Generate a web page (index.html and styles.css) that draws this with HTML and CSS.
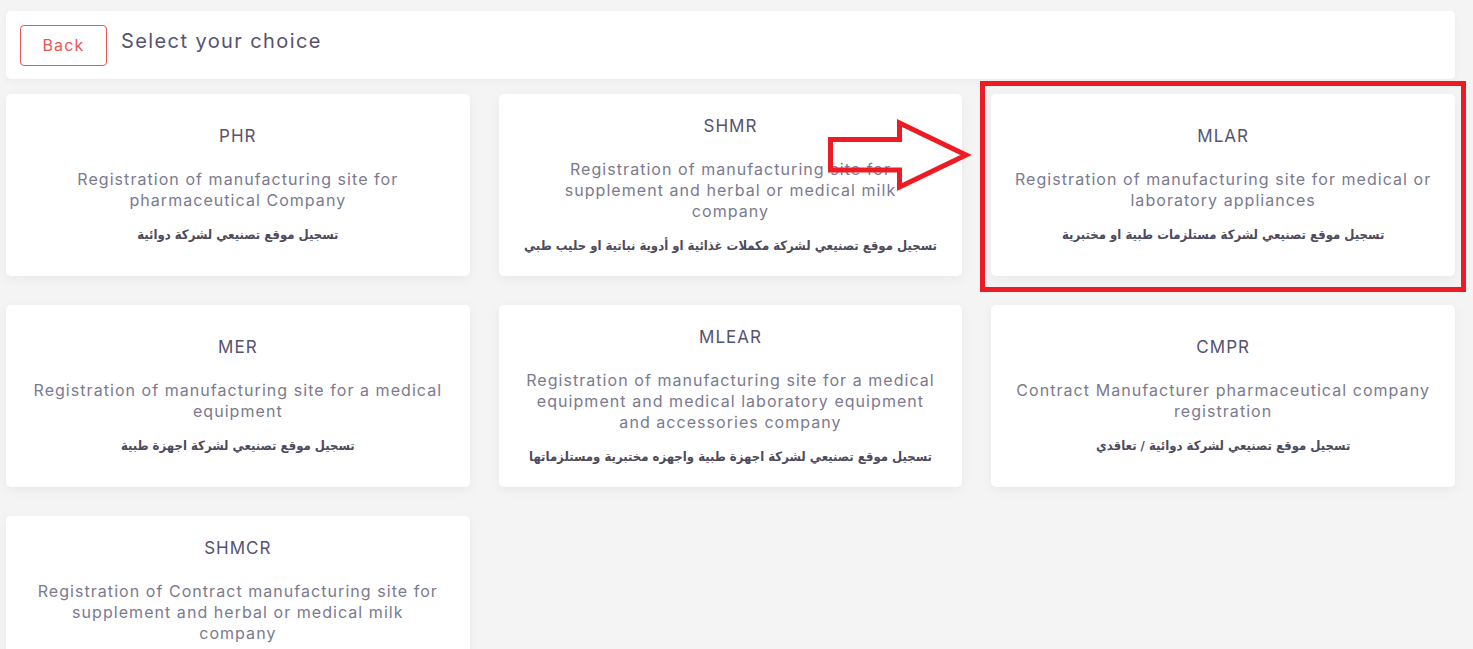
FILE: index.html
```html
<!DOCTYPE html>
<html lang="en">
<head>
<meta charset="utf-8">
<title>Select your choice</title>
<link rel="stylesheet" href="styles.css">
</head>
<body>
<div class="page">
  <header class="topbar">
    <button class="back-btn" type="button">Back</button>
    <h1 class="page-title">Select your choice</h1>
  </header>

  <main class="choices">
    <div class="card">
      <div class="card-title">PHR</div>
      <div class="card-desc">Registration of manufacturing site for pharmaceutical Company</div>
      <div class="card-ar" dir="rtl">تسجيل موقع تصنيعي لشركة دوائية</div>
    </div>
    <div class="card">
      <div class="card-title">SHMR</div>
      <div class="card-desc">Registration of manufacturing site for supplement and herbal or medical milk<br>company</div>
      <div class="card-ar" dir="rtl">تسجيل موقع تصنيعي لشركة مكملات غذائية او أدوية نباتية او حليب طبي</div>
    </div>
    <div class="card">
      <div class="card-title">MLAR</div>
      <div class="card-desc">Registration of manufacturing site for medical or laboratory appliances</div>
      <div class="card-ar" dir="rtl">تسجيل موقع تصنيعي لشركة مستلزمات طبية او مختبرية</div>
    </div>
    <div class="card">
      <div class="card-title">MER</div>
      <div class="card-desc">Registration of manufacturing site for a medical equipment</div>
      <div class="card-ar" dir="rtl">تسجيل موقع تصنيعي لشركة اجهزة طبية</div>
    </div>
    <div class="card">
      <div class="card-title">MLEAR</div>
      <div class="card-desc">Registration of manufacturing site for a medical equipment and medical laboratory equipment and accessories company</div>
      <div class="card-ar" dir="rtl">تسجيل موقع تصنيعي لشركة اجهزة طبية واجهزه مختبرية ومستلزماتها</div>
    </div>
    <div class="card">
      <div class="card-title">CMPR</div>
      <div class="card-desc">Contract Manufacturer pharmaceutical company registration</div>
      <div class="card-ar" dir="rtl">تسجيل موقع تصنيعي لشركة دوائية / تعاقدي</div>
    </div>
    <div class="card">
      <div class="card-title">SHMCR</div>
      <div class="card-desc">Registration of Contract manufacturing site for supplement and herbal or medical milk<br>company</div>
      <div class="card-ar" dir="rtl">تسجيل موقع تصنيعي لشركة مكملات غذائية او حليب طبي / تعاقدي</div>
    </div>
  </main>
</div>

<div class="highlight-box"></div>
<svg class="highlight-arrow" width="160" height="90" viewBox="815 110 160 90" aria-hidden="true">
  <polygon points="830.5,139.5 899.5,139.5 899.5,123 966,155 899.5,187 899.5,170 830.5,170" fill="none" stroke="#ed1c24" stroke-width="5" stroke-linejoin="miter"/>
</svg>
</body>
</html>
```

FILE: styles.css
```css
html, body {
  margin: 0;
  padding: 0;
}

body {
  background: #f4f4f5;
  font-family: "Inter", "Open Sans", "Liberation Sans", sans-serif;
  color: #55536f;
  overflow: hidden;
}

.page {
  padding: 11px 18px 0 6px;
}

.topbar {
  background: #ffffff;
  height: 68px;
  border-radius: 5px;
  display: flex;
  align-items: center;
  padding: 0 14px;
  gap: 14px;
  box-shadow: 0 2px 8px rgba(0, 0, 0, 0.04);
}

.back-btn {
  width: 87px;
  height: 41px;
  border: 1px solid #ea5455;
  border-radius: 4px;
  background: #ffffff;
  color: #ea5455;
  font-family: inherit;
  font-size: 16px;
  letter-spacing: 1.2px;
  padding: 0;
  cursor: pointer;
}

.page-title {
  margin: 0 0 8px 0;
  font-size: 20px;
  letter-spacing: 1.4px;
  font-weight: 400;
  color: #55536f;
}

.choices {
  margin-top: 15px;
  display: grid;
  grid-template-columns: repeat(3, minmax(0, 1fr));
  gap: 29px;
}

.card {
  background: #ffffff;
  border-radius: 5px;
  height: 182px;
  box-sizing: border-box;
  padding: 0 20px;
  display: flex;
  flex-direction: column;
  justify-content: center;
  align-items: center;
  text-align: center;
  box-shadow: 0 3px 12px rgba(0, 0, 0, 0.05);
}

.card-title {
  font-size: 17px;
  letter-spacing: 1px;
  line-height: 22px;
  color: #55536f;
  margin-bottom: 22px;
}

.card-desc {
  font-size: 16px;
  letter-spacing: 1.05px;
  line-height: 21px;
  color: #7b7a8e;
  margin-bottom: 14px;
}

.card-ar {
  font-family: "DejaVu Sans Condensed", "DejaVu Sans", sans-serif;
  font-weight: 700;
  font-size: 13px;
  line-height: 20px;
  color: #4d4b5c;
}

.highlight-box {
  position: absolute;
  left: 980px;
  top: 81px;
  width: 486px;
  height: 211px;
  box-sizing: border-box;
  border: 5px solid #ed1c24;
  pointer-events: none;
}

.highlight-arrow {
  position: absolute;
  left: 815px;
  top: 110px;
  pointer-events: none;
}
```
